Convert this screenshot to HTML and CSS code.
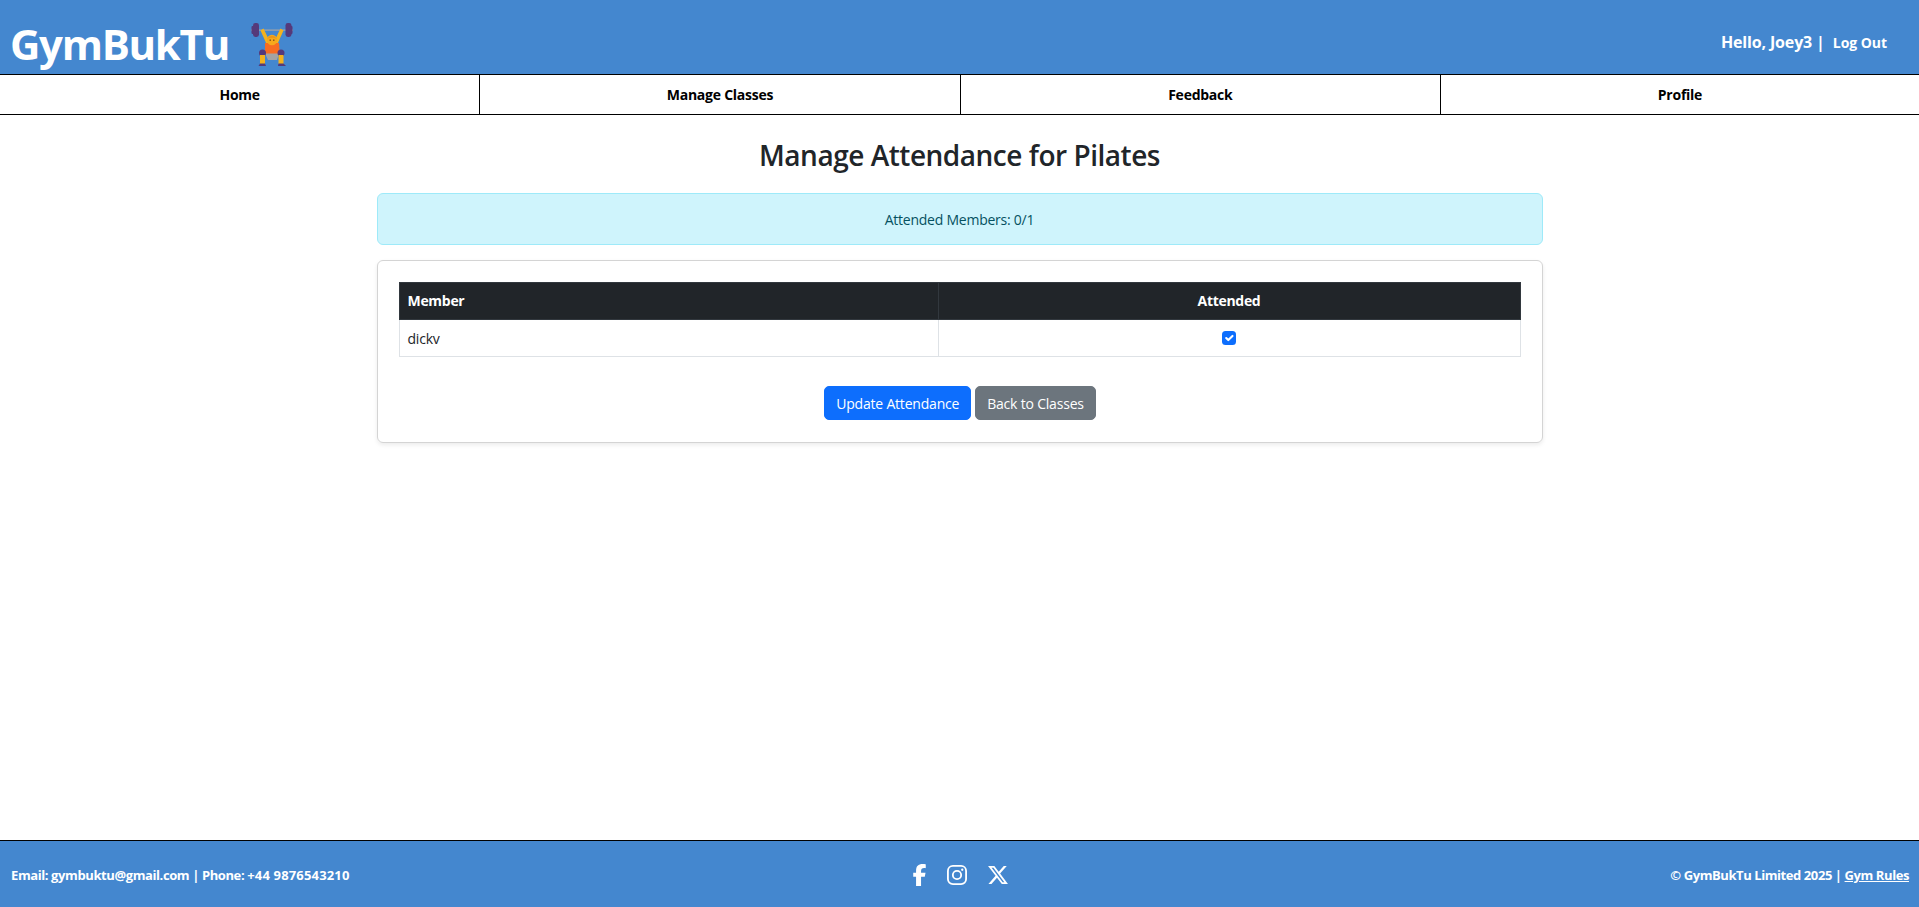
FILE: index.html
```html
<!DOCTYPE html>
<html lang="en">
<head>
<meta charset="utf-8">
<title>GymBukTu</title>
<link rel="stylesheet" href="styles.css">
</head>
<body>
<header class="site-header">
  <div class="brand">
    <span class="brand-name">GymBukTu</span>
    <svg class="brand-icon" viewBox="0 0 42 43" aria-hidden="true">
      <rect x="0" y="6.5" width="42" height="1.2" fill="#a5a5a5"/>
      <rect x="0.5" y="3" width="2.5" height="8" rx="1" fill="#55397a"/>
      <rect x="2" y="0" width="6" height="14" rx="2.4" fill="#55397a"/>
      <rect x="34.5" y="0" width="6" height="14" rx="2.4" fill="#55397a"/>
      <rect x="39" y="3" width="2.5" height="8" rx="1" fill="#55397a"/>
      <path d="M9.5 7.5 L12.5 5.5 L19 19 L16 22 Z" fill="#f5b21d"/>
      <path d="M32.5 7.5 L29.5 5.5 L23 19 L26 22 Z" fill="#f5b21d"/>
      <path d="M14 20 L28 20 L29 32 L14 32 Z" fill="#f76c22"/>
      <circle cx="21" cy="17" r="5.2" fill="#f6a81c"/>
      <path d="M16 16 Q21 9.5 26 16 Q21 13.5 16 16 Z" fill="#e8951a"/>
      <rect x="18.6" y="16.5" width="1.2" height="1.4" fill="#6b3f16"/>
      <rect x="22.2" y="16.5" width="1.2" height="1.4" fill="#6b3f16"/>
      <path d="M14 30.5 H28 L26 37 H17 Z" fill="#a3a3a3"/>
      <circle cx="11.5" cy="30" r="3.5" fill="#55397a"/>
      <circle cx="30" cy="30" r="3.5" fill="#55397a"/>
      <rect x="9" y="32" width="5" height="9" fill="#f5b21d"/>
      <rect x="27.5" y="32" width="5" height="9" fill="#f5b21d"/>
      <path d="M7.5 43 L9 40.5 H14 L15 43 Z" fill="#55397a"/>
      <path d="M27 43 L27.5 40.5 H32.5 L35 43 Z" fill="#55397a"/>
    </svg>
  </div>
  <div class="user-box">
    <span class="greeting">Hello, Joey3 |</span>
    <a class="logout" href="#">Log Out</a>
  </div>
</header>
<nav class="main-nav">
  <a href="#">Home</a>
  <a href="#">Manage Classes</a>
  <a href="#">Feedback</a>
  <a href="#">Profile</a>
</nav>
<main class="content">
  <h1 class="page-title">Manage Attendance for Pilates</h1>
  <div class="alert">Attended Members: 0/1</div>
  <section class="card">
    <table class="attendance">
      <thead>
        <tr><th class="col-member">Member</th><th class="col-attended">Attended</th></tr>
      </thead>
      <tbody>
        <tr>
          <td>dickv</td>
          <td class="cell-check">
            <span class="check">
              <svg viewBox="0 0 20 20" aria-hidden="true"><path d="M6 10l3 3 6-6" fill="none" stroke="#fff" stroke-width="3" stroke-linecap="round" stroke-linejoin="round"/></svg>
            </span>
          </td>
        </tr>
      </tbody>
    </table>
    <div class="actions">
      <button class="btn btn-primary" type="button">Update Attendance</button>
      <button class="btn btn-secondary" type="button">Back to Classes</button>
    </div>
  </section>
</main>
<footer class="site-footer">
  <div class="foot-left">Email: gymbuktu@gmail.com | Phone: <span class="foot-phone">+44 9876543210</span></div>
  <div class="socials">
    <svg class="social-f" viewBox="14 0 292 512" aria-hidden="true"><path fill="#fff" d="M80 299.3V512H196V299.3h86.5l18-97.8H196V166.9c0-51.7 20.3-71.5 72.7-71.5c16.3 0 29.4.4 37 1.2V7.9C291.4 4 256.4 0 236.2 0C129.3 0 80 50.5 80 159.4v42.1H14v97.8H80z"/></svg>
    <svg class="social-i" viewBox="0 0 24 24" aria-hidden="true"><rect x="1.1" y="1.1" width="21.8" height="21.8" rx="6" fill="none" stroke="#fff" stroke-width="2.2"/><circle cx="12" cy="12" r="5" fill="none" stroke="#fff" stroke-width="2.2"/><circle cx="18.3" cy="5.7" r="1.4" fill="#fff"/></svg>
    <svg class="social-x" viewBox="26 48 462 416" aria-hidden="true"><path fill="#fff" d="M389.2 48h70.6L305.6 224.2 487 464H345L233.7 318.6 106.5 464H35.8L200.7 275.5 26.8 48H172.4L272.9 180.9 389.2 48zM364.4 421.8h39.1L151.1 88h-42L364.4 421.8z"/></svg>
  </div>
  <div class="foot-right">© GymBukTu Limited 2025 | <a href="#">Gym Rules</a></div>
</footer>
</body>
</html>
```
FILE: styles.css
```css
* { box-sizing: border-box; }
html, body { height: 100%; }
body {
  margin: 0;
  min-height: 907px;
  display: flex;
  flex-direction: column;
  background: #fff;
  color: #212529;
  font-family: "Open Sans", "Noto Sans", "Liberation Sans", sans-serif;
  font-size: 14px;
}
.site-header {
  height: 75px;
  flex: none;
  background: #4487cf;
  border-bottom: 1px solid #000;
  display: flex;
  align-items: center;
  justify-content: space-between;
  padding: 14px 32px 0 10px;
  color: #fff;
}
.brand { display: flex; align-items: center; gap: 22px; }
.brand-name { font-size: 42px; font-weight: 700; letter-spacing: -1.3px; line-height: 1; }
.brand-icon { width: 42px; height: 43px; }
.user-box { display: flex; align-items: center; gap: 8px; margin-top: -4px; }
.greeting { font-size: 16px; font-weight: 700; letter-spacing: -0.15px; }
.logout { color: #fff; text-decoration: none; font-size: 14px; font-weight: 700; letter-spacing: -0.05px; }
.main-nav {
  height: 40px;
  flex: none;
  display: grid;
  grid-template-columns: repeat(3, 480.33px) 1fr;
  border-bottom: 1px solid #000;
}
.main-nav a {
  display: flex;
  align-items: center;
  justify-content: center;
  color: #000;
  font-size: 14px;
  font-weight: 700;
  text-decoration: none;
  border-right: 1px solid #000;
  letter-spacing: -0.25px;
}
.main-nav a:last-child { border-right: 0; }
.content { flex: 1; width: 1166px; margin: 0 auto; padding-top: 22px; }
.page-title { margin: 0 0 20px; text-align: center; font-size: 28px; line-height: 36px; font-weight: 600; letter-spacing: -0.48px; }
.alert {
  height: 52px;
  display: flex;
  align-items: center;
  justify-content: center;
  background: #cff4fc;
  border: 1px solid #9eeaf9;
  border-radius: 6px;
  color: #055160;
  font-size: 14px;
  letter-spacing: -0.24px;
}
.card {
  margin-top: 15px;
  height: 183px;
  padding: 21px 21px 0;
  border: 1px solid #d4d4d4;
  border-radius: 6px;
  box-shadow: 0 2px 4px rgba(0,0,0,.08);
}
.attendance { width: 100%; border-collapse: collapse; font-size: 14px; table-layout: fixed; }
.attendance th { background: #212529; color: #fff; height: 37px; padding: 0 8px 1px; font-weight: 700; border: 1px solid #32383e; letter-spacing: -0.3px; }
.col-member { width: 539px; text-align: left; }
.col-attended { text-align: center; }
.attendance td { height: 37px; padding: 0 8px; border: 1px solid #dee2e6; letter-spacing: -0.2px; }
.attendance td.cell-check { text-align: center; padding: 0 8px 4px 8px; }
.check { display: inline-flex; width: 14px; height: 14px; border-radius: 3.5px; background: #0d6efd; vertical-align: middle; }
.check svg { width: 14px; height: 14px; }
.actions { display: flex; justify-content: center; gap: 4px; margin-top: 29px; padding-left: 1px; }
.btn { height: 34px; padding: 0 11px; border: 1px solid; border-radius: 5px; color: #fff; font: inherit; font-size: 14px; letter-spacing: -0.2px; }
.btn-primary { background: #0d6efd; border-color: #0d6efd; }
.btn-secondary { background: #6c757d; border-color: #6c757d; }
.site-footer {
  height: 67px;
  flex: none;
  background: #4487cf;
  border-top: 1px solid #000;
  display: grid;
  grid-template-columns: 1fr auto 1fr;
  align-items: center;
  padding: 2px 10px 0 11px;
  color: #fff;
  font-size: 13px;
  font-weight: 700;
  letter-spacing: -0.4px;
}
.foot-phone { letter-spacing: 0.17px; }
.foot-right { text-align: right; letter-spacing: -0.42px; }
.foot-right a { color: #fff; }
.socials { display: flex; align-items: center; gap: 21px; }
.social-f { width: 13px; height: 22px; display: block; }
.social-i { width: 20px; height: 20px; display: block; }
.social-x { width: 20px; height: 18px; display: block; }
```
